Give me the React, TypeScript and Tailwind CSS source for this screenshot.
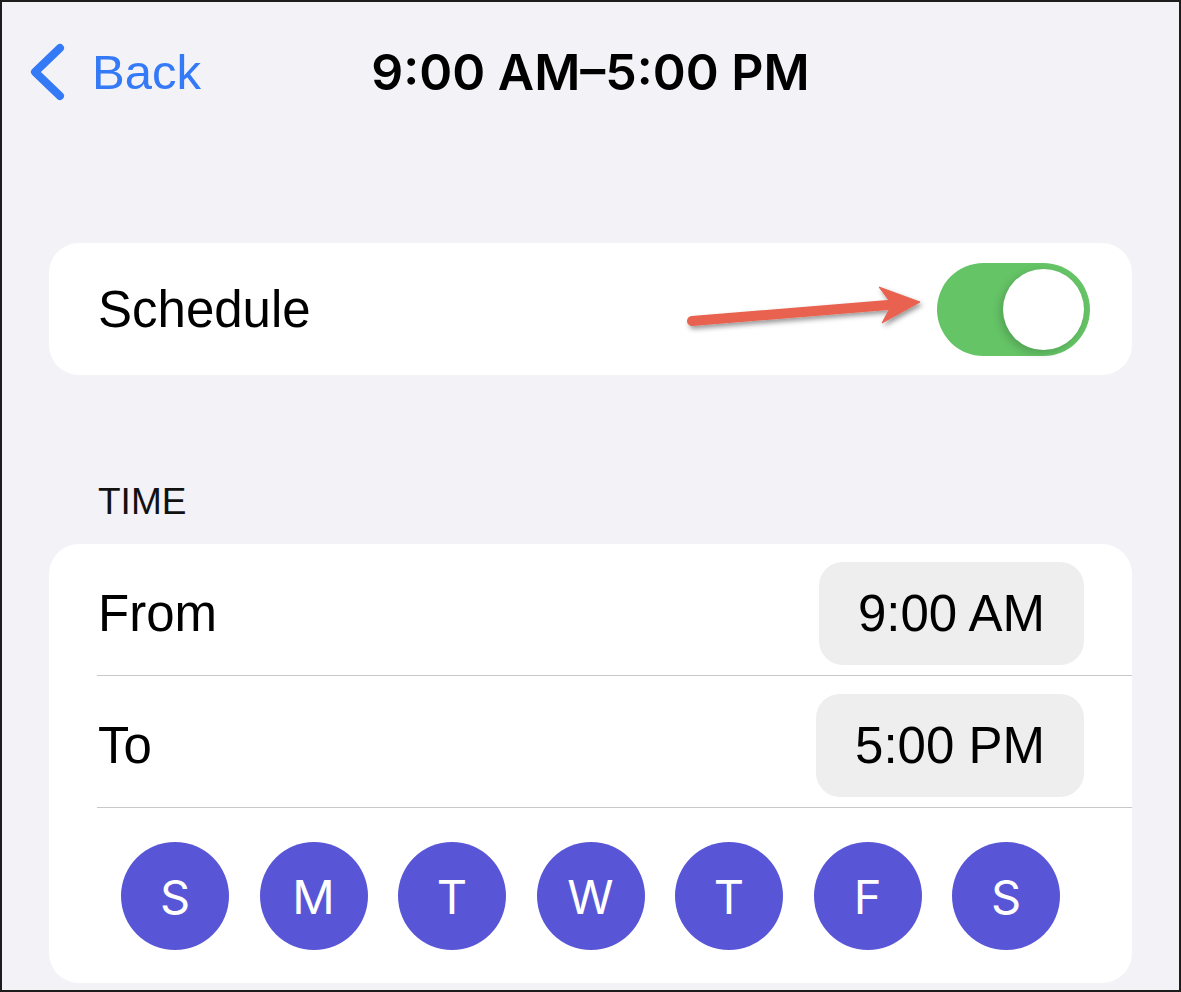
import { useState } from "react";

const days = ["S", "M", "T", "W", "T", "F", "S"];

const body = "font-['Liberation_Sans',Arial,sans-serif]";
const sf = "font-['Inter','Liberation_Sans',sans-serif]";

function Toggle({ on, onChange }: { on: boolean; onChange: (v: boolean) => void }) {
  return (
    <button
      onClick={() => onChange(!on)}
      className={`relative flex h-[93px] w-[153px] items-center rounded-full px-[6px] transition-colors ${
        on ? "justify-end bg-[#65c466]" : "justify-start bg-[#e9e9ea]"
      }`}
    >
      <span className="block size-[81px] rounded-full bg-white shadow-[-3px_3px_8px_rgba(0,0,0,0.18)]" />
    </button>
  );
}

// red pointer drawn over the schedule row
function Pointer() {
  return (
    <svg className="pointer-events-none absolute inset-0" width="1083" height="132" viewBox="0 0 1083 132">
      <defs>
        <filter id="drop" x="-10%" y="-50%" width="120%" height="200%">
          <feDropShadow dx="2" dy="3" stdDeviation="2.5" floodColor="#000" floodOpacity="0.4" />
        </filter>
      </defs>
      <g filter="url(#drop)" fill="#e8624f" stroke="#e8624f">
        <line x1="643" y1="78" x2="845" y2="61.5" strokeWidth="10" strokeLinecap="round" />
        <polygon points="871,59 830,44 843,61.5 833,80" strokeWidth="1" strokeLinejoin="round" />
      </g>
    </svg>
  );
}

function TimeRow({ label, value }: { label: string; value: string }) {
  return (
    <div className="flex items-center justify-between pb-[10px] pl-[49px] pr-[48px] pt-[18px]">
      <span className={`${body} text-[51px] leading-none text-black`}>{label}</span>
      <span
        className={`${body} flex h-[103px] items-center rounded-[24px] bg-[#eeeeef] px-[39px] text-[51px] leading-none text-black`}
      >
        {value}
      </span>
    </div>
  );
}

export default function App() {
  const [scheduled, setScheduled] = useState(true);

  return (
    <div className="box-border h-[992px] w-[1181px] overflow-hidden border-2 border-[#1d1d1d] bg-[#f2f2f7]">
      {/* nav bar */}
      <div className="grid h-[140px] grid-cols-[1fr_auto_1fr] items-center">
        <button className="flex items-center gap-[25px] pl-[25px] text-[#3479f6]">
          <svg width="40" height="60" viewBox="0 0 40 60" fill="none">
            <path d="M33 6 L8 30 L33 54" stroke="currentColor" strokeWidth="8" strokeLinecap="round" strokeLinejoin="round" />
          </svg>
          <span className={`${body} text-[49px] leading-none`}>Back</span>
        </button>
        <h1 className={`${sf} text-[50px] font-semibold leading-none text-black`}>9:00 AM–5:00 PM</h1>
        <div />
      </div>

      {/* schedule switch */}
      <div className="relative mx-[47px] mt-[101px] flex h-[132px] items-center justify-between rounded-[30px] bg-white pl-[49px] pr-[42px]">
        <span className={`${body} text-[51px] leading-none text-black`}>Schedule</span>
        <Toggle on={scheduled} onChange={setScheduled} />
        <Pointer />
      </div>

      <p className={`${body} ml-[96px] mt-[108px] text-[37px] leading-none text-[#111]`}>TIME</p>

      <div className="mx-[47px] mt-[24px] rounded-[30px] bg-white">
        <TimeRow label="From" value="9:00 AM" />
        <div className="ml-[48px] h-px bg-[#c8c8cc]" />
        <TimeRow label="To" value="5:00 PM" />
        <div className="ml-[48px] h-px bg-[#c8c8cc]" />
        <div className="flex justify-center gap-[30.5px] pb-[33px] pt-[34px]">
          {days.map((d, i) => (
            <div
              key={i}
              className={`${sf} flex size-[108px] items-center justify-center rounded-full bg-[#5856d6] text-[47px] leading-none text-white`}
            >
              {d}
            </div>
          ))}
        </div>
      </div>
    </div>
  );
}
